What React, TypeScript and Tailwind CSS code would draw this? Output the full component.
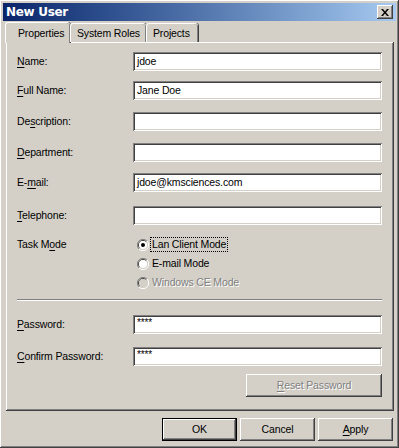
import React from 'react';

const raised = 'shadow-[inset_-1px_-1px_#404040,inset_1px_1px_#ffffff,inset_-2px_-2px_#808080,inset_2px_2px_#d4d0c8]';
const sunken = 'shadow-[inset_1px_1px_#808080,inset_-1px_-1px_#ffffff,inset_2px_2px_#404040,inset_-2px_-2px_#d4d0c8]';

const Acc = ({ children }: { children: React.ReactNode }) => <span className="underline underline-offset-[2px]">{children}</span>;

const Field = ({ label, value, top, small }: { label: React.ReactNode; value?: string; top: number; small?: boolean }) => (
    <div className="flex items-center h-[19px]" style={{ marginTop: top }}>
        <div className="w-[116px] shrink-0">{label}</div>
        <div className={`w-[249px] h-[19px] bg-white flex items-center px-[4px] ${sunken} ${small ? 'text-[10px] pb-[4px]' : ''}`}>{value}</div>
    </div>
);

const Radio = ({ checked, disabled }: { checked?: boolean; disabled?: boolean }) => (
    <svg width="12" height="12" viewBox="0 0 12 12" className="shrink-0">
        <path d="M10 2 A5.5 5.5 0 0 0 2 10" fill="none" stroke="#808080" strokeWidth="1" />
        <path d="M9.2 2.8 A4.5 4.5 0 0 0 2.8 9.2" fill="none" stroke="#404040" strokeWidth="1" />
        <path d="M10 2 A5.5 5.5 0 0 1 2 10" fill="none" stroke="#ffffff" strokeWidth="1" />
        <path d="M9.2 2.8 A4.5 4.5 0 0 1 2.8 9.2" fill="none" stroke="#d4d0c8" strokeWidth="1" />
        <circle cx="6" cy="6" r="4" fill={disabled ? '#d4d0c8' : '#ffffff'} />
        {checked && <circle cx="6" cy="6" r="2" fill="#000000" />}
    </svg>
);

const Btn = ({ children, isDefault, width, disabled }: { children: React.ReactNode; isDefault?: boolean; width: number; disabled?: boolean }) => (
    <div
        className={`h-[23px] bg-[#d4d0c8] flex items-center justify-center ${isDefault ? 'outline outline-1 outline-black -outline-offset-1 shadow-[inset_-2px_-2px_#404040,inset_2px_2px_#ffffff,inset_-3px_-3px_#808080]' : raised} ${disabled ? 'text-[#808080] [text-shadow:1px_1px_0_#ffffff]' : ''}`}
        style={{ width }}
    >
        {children}
    </div>
);

export default function App() {
    return (
        <div className={`w-[399px] h-[448px] bg-[#d4d0c8] text-black text-[10.5px] tracking-[-0.15px] leading-none flex flex-col font-['Liberation_Sans',Arial,sans-serif] ${raised}`}>
            {/* Title bar */}
            <div className="mx-[3px] mt-[3px] h-[18px] bg-gradient-to-r from-[#0a246a] to-[#a6caf0] flex items-center justify-between pl-[3px] pr-[3px]">
                <span className="text-white font-bold text-[12px] font-['DejaVu_Sans',sans-serif] tracking-[-0.3px]">New User</span>
                <div className={`w-[16px] h-[14px] bg-[#d4d0c8] flex items-center justify-center ${raised}`}>
                    <svg width="8" height="7" viewBox="0 0 8 7">
                        <path d="M0 0h2l2 2.5L6 0h2L5 3.5 8 7H6L4 4.5 2 7H0l3-3.5z" fill="#000" />
                    </svg>
                </div>
            </div>

            {/* Tabs */}
            <div className="flex items-end ml-[5px] mt-[1px] h-[20px] relative z-10">
                <div className="w-[65px] h-[21px] -mb-[1px] bg-[#d4d0c8] rounded-t-[3px] border-t border-l border-white shadow-[inset_-1px_0_#808080,1px_0_#404040] pl-[12px] pt-[5px]">Properties</div>
                <div className="w-[76px] h-[19px] bg-[#d4d0c8] rounded-t-[3px] border-t border-l border-white shadow-[inset_-1px_0_#808080,1px_0_#404040] pl-[6px] pt-[4px]">System Roles</div>
                <div className="w-[52px] h-[19px] bg-[#d4d0c8] rounded-t-[3px] border-t border-l border-white shadow-[inset_-1px_0_#808080,1px_0_#404040] pl-[6px] pt-[4px]">Projects</div>
            </div>

            {/* Panel */}
            <div className={`ml-[6px] w-[388px] h-[369px] pl-[11px] flex flex-col ${raised}`}>
                <Field top={10} label={<><Acc>N</Acc>ame:</>} value="jdoe" />
                <Field top={10} label={<><Acc>F</Acc>ull Name:</>} value="Jane Doe" />
                <Field top={12} label={<>De<Acc>s</Acc>cription:</>} />
                <Field top={12} label={<><Acc>D</Acc>epartment:</>} />
                <Field top={11} label={<>E-<Acc>m</Acc>ail:</>} value="jdoe@kmsciences.com" />
                <Field top={14} label={<><Acc>T</Acc>elephone:</>} />

                <div className="flex mt-[10px]">
                    <div className="w-[120px] shrink-0 h-[19px] flex items-center">Task M<Acc>o</Acc>de</div>
                    <div className="flex flex-col">
                        <div className="h-[19px] flex items-center gap-[2px]">
                            <Radio checked />
                            <span className="outline outline-1 outline-dotted outline-black px-[1px] py-[1px]">Lan Client Mode</span>
                        </div>
                        <div className="h-[19px] flex items-center gap-[3px]">
                            <Radio />
                            <span>E-mail Mode</span>
                        </div>
                        <div className="h-[19px] flex items-center gap-[3px]">
                            <Radio disabled />
                            <span className="text-[#808080] [text-shadow:1px_1px_0_#ffffff]">Windows CE Mode</span>
                        </div>
                    </div>
                </div>

                <div className="mt-[7px] w-[365px] h-[2px] border-t border-[#808080] border-b border-b-white" />

                <Field top={14} small label={<><Acc>P</Acc>assword:</>} value="****" />
                <Field top={13} small label={<><Acc>C</Acc>onfirm Password:</>} value="****" />

                <div className="mt-[8px] ml-[229px]">
                    <Btn width={136} disabled>
                        <span className="h-[22px] flex items-center"><Acc>R</Acc>eset Password</span>
                    </Btn>
                </div>
            </div>

            {/* Bottom buttons */}
            <div className="flex gap-[3px] ml-[162px] mt-[7px]">
                <Btn width={75} isDefault>OK</Btn>
                <Btn width={75}>Cancel</Btn>
                <Btn width={75}><Acc>A</Acc>pply</Btn>
            </div>
        </div>
    );
}
